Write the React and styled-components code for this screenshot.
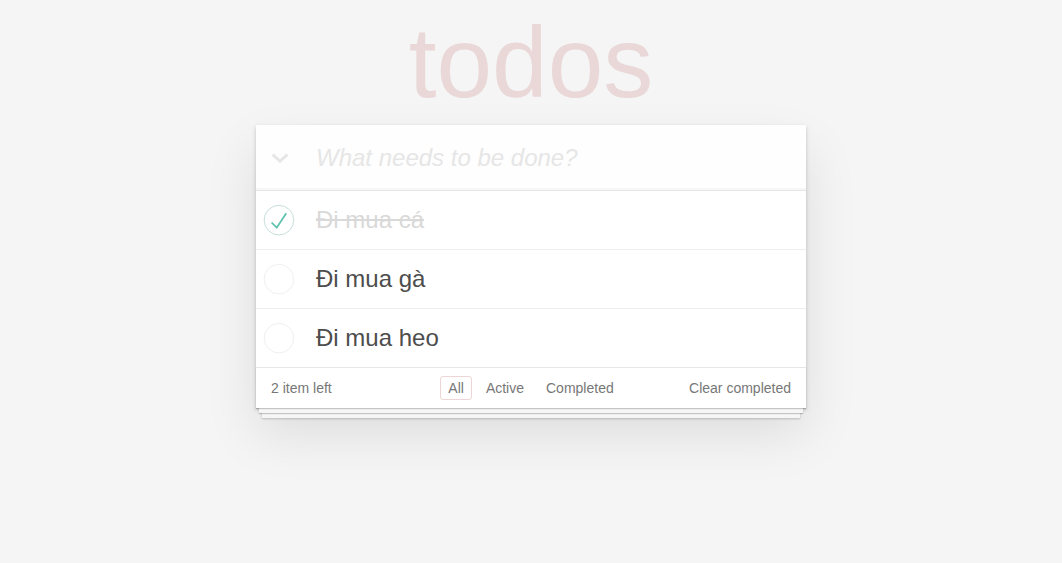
import React from "react";
import styled, { createGlobalStyle } from "styled-components";

const GlobalStyle = createGlobalStyle`
  html, body {
    margin: 0;
    padding: 0;
  }
  body {
    min-height: 100vh;
    background: #f5f5f5;
    font: 14px "Liberation Sans", Helvetica, Arial, sans-serif;
    line-height: 1.4em;
    color: #4d4d4d;
    font-weight: 300;
    -webkit-font-smoothing: antialiased;
  }
`;

const Page = styled.div`
  max-width: 550px;
  min-width: 230px;
  margin: 0 auto;
  padding: 12px 0 100px;
`;

const Title = styled.h1`
  margin: 0 0 13px;
  height: 100px;
  font-size: 100px;
  line-height: 100px;
  font-weight: 100;
  text-align: center;
  color: rgba(175, 47, 47, 0.15);
  text-rendering: optimizeLegibility;
`;

const Card = styled.section`
  background: #fff;
  margin: 0 0 40px;
  position: relative;
  box-shadow: 0 2px 4px 0 rgba(0, 0, 0, 0.2), 0 25px 50px 0 rgba(0, 0, 0, 0.1);
`;

const Header = styled.header`
  display: flex;
  align-items: center;
  box-shadow: inset 0 -2px 1px rgba(0, 0, 0, 0.03);
  background: rgba(0, 0, 0, 0.003);
`;

const ToggleAll = styled.button`
  width: 48px;
  flex-shrink: 0;
  height: 34px;
  border: none;
  background: none;
  padding: 0;
  margin: 0;
  display: flex;
  align-items: center;
  justify-content: center;
  cursor: pointer;
`;

const NewTodo = styled.input`
  flex: 1;
  min-width: 0;
  box-sizing: border-box;
  margin: 0;
  padding: 16px 16px 16px 12px;
  border: none;
  outline: none;
  background: transparent;
  font-family: inherit;
  font-size: 24px;
  font-weight: inherit;
  line-height: 33px;
  height: 65px;
  color: inherit;

  &::placeholder {
    font-style: italic;
    font-weight: 300;
    color: #e6e6e6;
  }
`;

const List = styled.ul`
  margin: 0;
  padding: 0;
  list-style: none;
  border-top: 1px solid #e6e6e6;
`;

const Item = styled.li`
  display: flex;
  align-items: center;
  font-size: 24px;
  border-bottom: 1px solid #ededed;

  &:last-child {
    border-bottom: none;
  }
`;

const Toggle = styled.svg`
  width: 40px;
  height: 40px;
  flex-shrink: 0;
  display: block;
`;

const Label = styled.label`
  flex: 1;
  padding: 15px 15px 15px 20px;
  line-height: 28px;
  word-break: break-all;
  color: ${(p) => (p.$done ? "#d9d9d9" : "#4d4d4d")};
  text-decoration: ${(p) => (p.$done ? "line-through" : "none")};
`;

const Footer = styled.footer`
  display: flex;
  align-items: center;
  color: #777;
  padding: 10px 15px;
  height: 20px;
  border-top: 1px solid #e6e6e6;
  box-shadow: 0 1px 1px rgba(0, 0, 0, 0.2), 0 8px 0 -3px #f6f6f6,
    0 9px 1px -3px rgba(0, 0, 0, 0.2), 0 16px 0 -6px #f6f6f6,
    0 17px 2px -6px rgba(0, 0, 0, 0.2);
`;

const Count = styled.span`
  flex: 1 1 0;
  text-align: left;
  line-height: 20px;

  strong {
    font-weight: 300;
  }
`;

const Filters = styled.ul`
  display: flex;
  align-items: center;
  margin: 0;
  padding: 0;
  list-style: none;
`;

const FilterLink = styled.a`
  display: inline-block;
  color: inherit;
  margin: 0 3px;
  padding: 3px 7px;
  line-height: 16px;
  text-decoration: none;
  border: 1px solid
    ${(p) => (p.$selected ? "rgba(175, 47, 47, 0.2)" : "transparent")};
  border-radius: 3px;
  cursor: pointer;
`;

const ClearWrap = styled.div`
  flex: 1 1 0;
  display: flex;
  justify-content: flex-end;
`;

const ClearButton = styled.button`
  margin: 0;
  padding: 0;
  border: none;
  background: none;
  font: inherit;
  color: inherit;
  line-height: 20px;
  cursor: pointer;
`;

const Chevron = () => (
  <svg width="18" height="10" viewBox="0 0 18 10">
    <polyline
      points="1.5,1.5 9,8.2 16.5,1.5"
      fill="none"
      stroke="#e6e6e6"
      strokeWidth="3"
    />
  </svg>
);

const Check = ({ done }) => (
  <Toggle viewBox="-10 -18 100 135">
    <circle
      cx="50"
      cy="50"
      r="50"
      fill="none"
      stroke={done ? "#bddad5" : "#ededed"}
      strokeWidth="3"
    />
    {done && <path fill="#5dc2af" d="M72 25L42 71 27 56l-4 4 20 20 34-52z" />}
  </Toggle>
);

const todos = [
  { id: 1, title: "Đi mua cá", done: true },
  { id: 2, title: "Đi mua gà", done: false },
  { id: 3, title: "Đi mua heo", done: false },
];

export default function App() {
  return (
    <>
      <GlobalStyle />
      <Page>
        <Title>todos</Title>
        <Card>
          <Header>
            <ToggleAll aria-label="Mark all as complete">
              <Chevron />
            </ToggleAll>
            <NewTodo placeholder="What needs to be done?" />
          </Header>
          <List>
            {todos.map((t) => (
              <Item key={t.id}>
                <Check done={t.done} />
                <Label $done={t.done}>{t.title}</Label>
              </Item>
            ))}
          </List>
          <Footer>
            <Count>
              <strong>2</strong> item left
            </Count>
            <Filters>
              <li>
                <FilterLink $selected>All</FilterLink>
              </li>
              <li>
                <FilterLink>Active</FilterLink>
              </li>
              <li>
                <FilterLink>Completed</FilterLink>
              </li>
            </Filters>
            <ClearWrap>
              <ClearButton>Clear completed</ClearButton>
            </ClearWrap>
          </Footer>
        </Card>
      </Page>
    </>
  );
}
